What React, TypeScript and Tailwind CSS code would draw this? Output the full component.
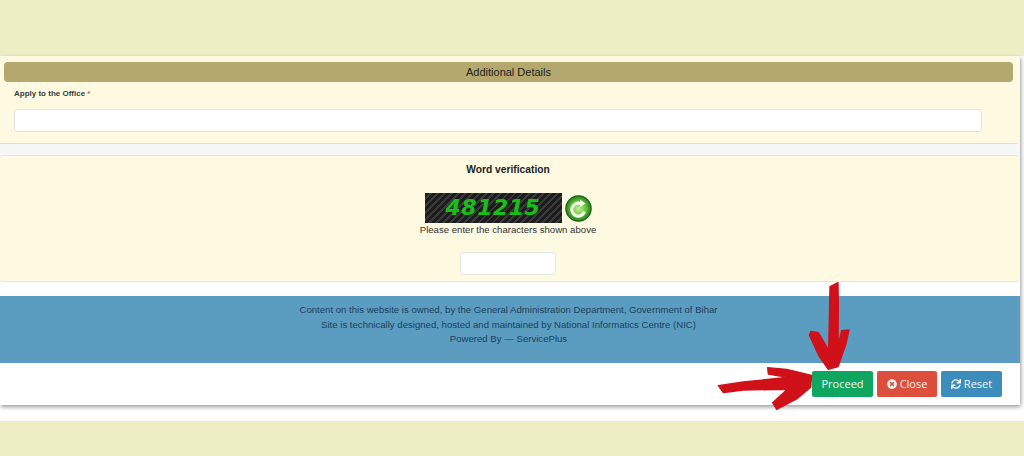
import { FaSync, FaTimesCircle } from 'react-icons/fa';

// hand drawn arrows on the screenshot, pointing at the Proceed button
function RedArrows() {
  return (
    <svg className="absolute left-[700px] top-[270px]" width="324" height="160" viewBox="0 0 972 480">
      <path
        d="M390 50 L414 38 L415 100 L414 225 L425 182 L447 180 L437 225 L414 290 L385 298 L358 260 L328 195 L333 184 L355 188 L386 240 Z"
        fill="#d0111a"
        stroke="#d0111a"
        strokeWidth="4"
        strokeLinejoin="round"
      />
      <path
        d="M55 347 L130 336 L262 322 L205 312 L203 293 L260 298 L335 316 L332 352 L290 387 L230 418 L218 398 L262 358 L130 360 L70 368 Z"
        fill="#d0111a"
        stroke="#d0111a"
        strokeWidth="4"
        strokeLinejoin="round"
      />
    </svg>
  );
}

function RefreshBall() {
  return (
    <svg width="27" height="27" viewBox="0 0 27 27">
      <defs>
        <radialGradient id="ball" cx="50%" cy="50%" r="50%">
          <stop offset="0%" stopColor="#c8ee9a" />
          <stop offset="60%" stopColor="#5fbf3a" />
          <stop offset="88%" stopColor="#2f8a22" />
          <stop offset="100%" stopColor="#123d10" />
        </radialGradient>
      </defs>
      <circle cx="13.5" cy="13.5" r="13.2" fill="url(#ball)" />
      <path d="M15.5 8.5 A6.5 6.5 0 1 0 19.5 16.5" fill="none" stroke="#f4fbe6" strokeWidth="3" />
      <polygon points="15,4.5 20.5,8.5 15,12" fill="#f4fbe6" />
    </svg>
  );
}

function Captcha() {
  return (
    <div className="flex items-center justify-center gap-[3px]">
      <div className="w-[137px] h-[30px] flex items-center justify-center bg-[repeating-linear-gradient(135deg,#1c1c1c_0px,#1c1c1c_3px,#3a3a3a_3px,#3a3a3a_5px)]">
        <span className="font-['DejaVu_Sans'] font-bold italic text-[22px] leading-none tracking-[0.5px] text-[#16c016]">481215</span>
      </div>
      <RefreshBall />
    </div>
  );
}

export default function App() {
  return (
    <div className="relative h-[456px] w-[1024px] overflow-hidden bg-white font-['Liberation_Sans',sans-serif]">
      <div className="h-[56px] bg-[#eeeec5]" />

      <div className="w-[1020px] h-[349px] bg-[#f7f7f7] shadow-[1px_2px_4px_rgba(0,0,0,0.4)] rounded-br-[3px]">
        <section className="h-[88px] mr-[1px] bg-[#fefae2] pt-[6px] pl-[4px] pr-[6px] border-b border-[#dddddd] rounded-br-[3px]">
          <div className="h-[20px] rounded-[4px] bg-[#b4a86c] text-center text-[11px] leading-[20px] text-[#222222]">
            Additional Details
          </div>
          <label className="block mt-[7px] ml-[10px] text-[8px] leading-[10px] font-bold text-[#3a3a3a]">
            Apply to the Office <span className="text-[#d9534f]">*</span>
          </label>
          <div className="mt-[10px] ml-[10px] w-[968px] h-[23px] bg-white border border-[#e2e2e2] rounded-[3px]" />
        </section>

        <section className="mt-[11px] mr-[1px] h-[127px] bg-[#fefae2] pt-[8px] pr-[3px] text-center border-y border-[#e6e6e6] rounded-[3px]">
          <h3 className="text-[10.25px] leading-[12px] font-bold text-[#222222] mb-[17px]">Word verification</h3>
          <Captcha />
          <p className="text-[9.6px] leading-[12px] text-[#333333] mt-[1px]">Please enter the characters shown above</p>
          <div className="mx-auto mt-[16px] w-[96px] h-[23px] bg-white border border-[#e6e6e6] rounded-[3px]" />
        </section>

        <div className="h-[14px] bg-white" />

        <footer className="h-[67px] bg-[#5a9dc0] pt-[7px] pr-[3px] text-center text-[9.6px] leading-[14.5px] text-[#1d3f5c]">
          <p>Content on this website is owned, by the General Administration Department, Government of Bihar</p>
          <p>Site is technically designed, hosted and maintained by National Informatics Centre (NIC)</p>
          <p>Powered By — ServicePlus</p>
        </footer>

        <div className="h-[42px] bg-white flex items-start justify-end gap-[4px] pt-[8px] pr-[18px] font-['Open_Sans',sans-serif] text-[11px] text-[#f2f7f2]">
          <button className="w-[61px] h-[26px] rounded-[2px] bg-[#0fa75f]">Proceed</button>
          <button className="w-[60px] h-[26px] rounded-[2px] bg-[#dd4f3c] flex items-center justify-center gap-[3px]">
            <FaTimesCircle size={10} />
            Close
          </button>
          <button className="w-[61px] h-[26px] rounded-[2px] bg-[#3c8dbc] flex items-center justify-center gap-[3px]">
            <FaSync size={10} />
            Reset
          </button>
        </div>
      </div>

      <div className="mt-[16px] h-[35px] bg-[#eeeec5]" />

      <RedArrows />
    </div>
  );
}
